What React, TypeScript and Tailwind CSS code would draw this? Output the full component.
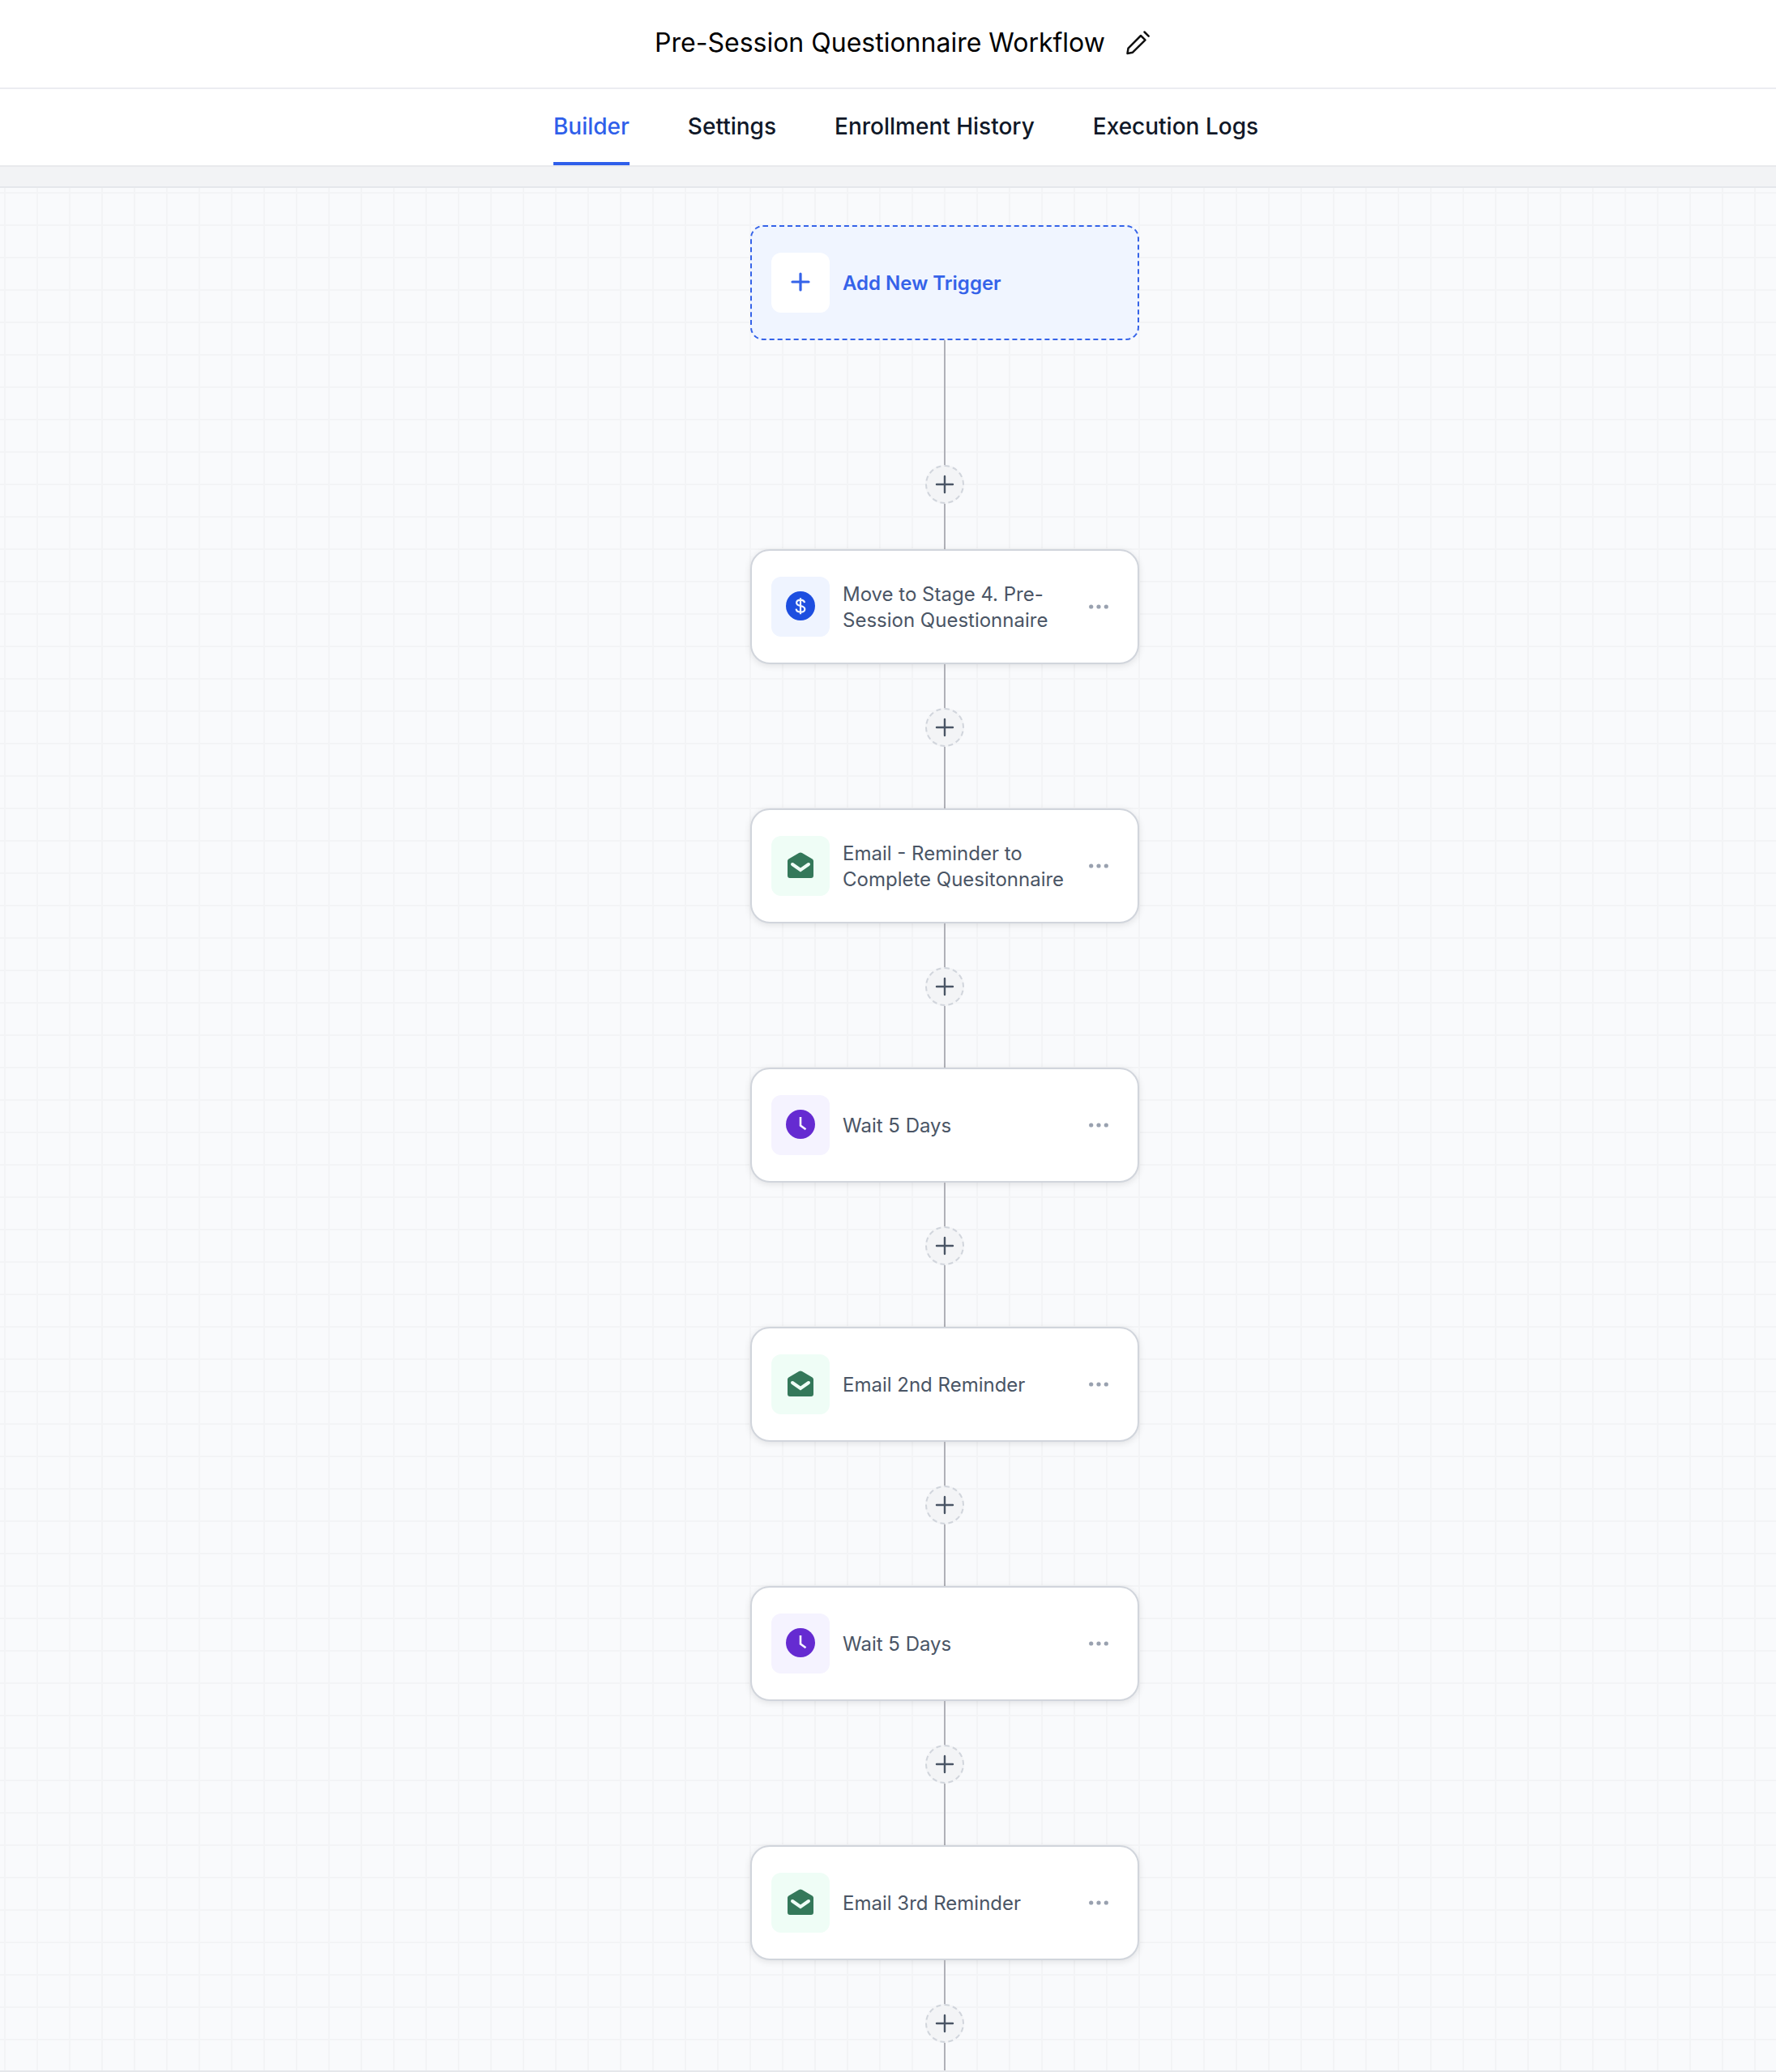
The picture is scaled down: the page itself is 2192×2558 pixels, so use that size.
const tabs = ["Builder", "Settings", "Enrollment History", "Execution Logs"];

type StepKind = "deal" | "email" | "wait";

const steps: { kind: StepKind; title: string }[] = [
    { kind: "deal", title: "Move to Stage 4. Pre-Session Questionnaire" },
    { kind: "email", title: "Email - Reminder to Complete Quesitonnaire" },
    { kind: "wait", title: "Wait 5 Days" },
    { kind: "email", title: "Email 2nd Reminder" },
    { kind: "wait", title: "Wait 5 Days" },
    { kind: "email", title: "Email 3rd Reminder" },
];

const tileColors: Record<StepKind, string> = {
    deal: "bg-[#eff4ff]",
    email: "bg-[#effdf6]",
    wait: "bg-[#f5f3ff]",
};

function PencilIcon() {
    return (
        <svg width="32" height="32" viewBox="0 0 32 32" fill="none" stroke="#111" strokeWidth="2.5" strokeLinecap="round" strokeLinejoin="round" aria-hidden="true">
            <path d="M3.500 29 4.500 22.700 20 7 25.500 12.300 10 27.700z" />
            <path d="M24.500 2.500l5.200 5.200" />
        </svg>
    );
}

function StepIcon({ kind }: { kind: StepKind }) {
    if (kind === "email") {
        return (
            <svg width="36" height="36" viewBox="0 0 36 36" aria-hidden="true">
                <path d="M18 2.500c.7 0 1.300.2 1.900.5l12.300 7.200c1.100.6 1.800 1.500 1.800 2.800V31a3 3 0 0 1-3 3H5a3 3 0 0 1-3-3V13c0-1.300.7-2.200 1.800-2.800L16.100 3c.6-.3 1.200-.5 1.900-.5z" fill="#34785a" />
                <path d="M8 17l10 7 10-7" fill="none" stroke="#effdf6" strokeWidth="4" strokeLinecap="round" />
            </svg>
        );
    }
    return (
        <svg width="36" height="36" viewBox="0 0 36 36" aria-hidden="true">
            <circle cx="18" cy="18" r="18" fill={kind === "wait" ? "#652bd1" : "#1d4ee0"} />
            {kind === "wait" ? (
                <path d="M18 9v10.500l6.500 4.700" fill="none" stroke="#f5f3ff" strokeWidth="2.6" />
            ) : (
                <path d="M23 14.200c-.3-2.300-2.100-3.600-5-3.600s-4.900 1.400-4.900 3.600c0 5.300 10.200 2.300 10.200 7.700 0 2.300-2.200 3.700-5.300 3.700s-5.200-1.400-5.400-3.900M18 8.200v20" fill="none" stroke="#eff4ff" strokeWidth="2.2" />
            )}
        </svg>
    );
}

function PlusIcon({ strokeWidth }: { strokeWidth: number }) {
    return (
        <svg width="24" height="24" viewBox="0 0 24 24" fill="none" stroke="currentColor" strokeWidth={strokeWidth} strokeLinecap="round" aria-hidden="true">
            <path d="M12 2v20M2 12h20" />
        </svg>
    );
}

function AddStep() {
    return (
        <button aria-label="Add step" className="flex size-12 items-center justify-center rounded-full border-2 border-dashed border-gray-300 bg-gray-100 pb-px text-gray-600">
            <PlusIcon strokeWidth={2.4} />
        </button>
    );
}

function StepCard({ kind, title }: { kind: StepKind; title: string }) {
    return (
        <article className="flex h-[142px] w-[480px] items-center gap-4 rounded-3xl border-2 border-gray-300 bg-white pl-6 pr-8 shadow-[0_2px_8px_rgba(0,0,0,0.1)]">
            <div className={`flex h-[74px] w-[72px] shrink-0 items-center justify-center rounded-xl pb-0.5 ${tileColors[kind]}`}>
                <StepIcon kind={kind} />
            </div>
            <h2 className="flex-1 pt-0.5 text-2xl leading-8 text-gray-600">{title}</h2>
            <button aria-label="Step options" className="text-gray-400">
                <svg width="32" height="32" viewBox="0 0 32 32" fill="currentColor" aria-hidden="true">
                    <circle cx="6.700" cy="16" r="2.600" />
                    <circle cx="16" cy="16" r="2.600" />
                    <circle cx="25.300" cy="16" r="2.600" />
                </svg>
            </button>
        </article>
    );
}

export default function App() {
    return (
        <div className="flex min-h-screen flex-col bg-white font-['Inter',sans-serif]">
            <header className="flex h-[110px] items-center justify-center gap-6 border-b-2 border-[#ebecf1] pb-0.5 pl-9">
                <h1 className="text-[32px] leading-10 text-black">Pre-Session Questionnaire Workflow</h1>
                <button aria-label="Rename workflow">
                    <PencilIcon />
                </button>
            </header>
            <nav className="flex h-24 justify-center gap-[72px] border-b-2 border-[#e8e9ec] pl-11">
                {tabs.map((tab, i) => (
                    <a key={tab} href="#" className={`flex items-center border-b-4 pt-0.5 text-[28px] font-medium leading-10 ${i === 0 ? "border-[#2f5fea] text-[#2f5fea]" : "border-transparent text-gray-900"}`}>
                        {tab}
                    </a>
                ))}
            </nav>
            <div className="h-[26px] border-b-2 border-gray-200 bg-[#f2f3f5]" />
            <main className="flex flex-1 flex-col items-center border-b-2 border-gray-200 bg-[#f9fafc] bg-[linear-gradient(to_right,#f3f4f6_2px,transparent_2px),linear-gradient(to_bottom,#f3f4f6_2px,transparent_2px)] bg-[size:40px_40px] bg-[position:5px_5px] pl-[140px] pt-[46px]">
                <button className="flex h-[142px] w-[480px] items-center gap-4 rounded-2xl border-2 border-dashed border-[#3563e9] bg-[#f0f5ff] px-6 text-[#3563e9]">
                    <span className="flex h-[74px] w-[72px] items-center justify-center rounded-xl bg-white pb-0.5">
                        <PlusIcon strokeWidth={3.2} />
                    </span>
                    <span className="pt-0.5 text-2xl font-semibold">Add New Trigger</span>
                </button>
                <div className="h-[154px] w-0.5 bg-[#b0b1b8]" />
                <AddStep />
                <div className="h-14 w-0.5 bg-[#b0b1b8]" />
                {steps.map((step, i) => (
                    <div key={i} className="flex flex-col items-center">
                        <StepCard kind={step.kind} title={step.title} />
                        <div className="h-[54px] w-0.5 bg-[#b0b1b8]" />
                        <AddStep />
                        <div className={i === steps.length - 1 ? "h-[34px] w-0.5 bg-[#b0b1b8]" : "h-[76px] w-0.5 bg-[#b0b1b8]"} />
                    </div>
                ))}
            </main>
        </div>
    );
}
